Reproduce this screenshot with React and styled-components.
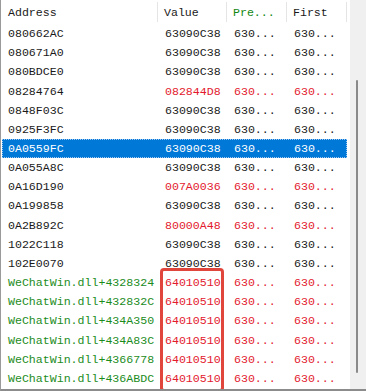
import React from 'react';
import styled, { createGlobalStyle } from 'styled-components';

const GlobalStyle = createGlobalStyle`
  html, body {
    margin: 0;
    padding: 0;
    background: #ffffff;
  }
`;

const columns = ['157px', '69px', '60px', '60px'];

const rows = [
  { address: '080662AC', value: '63090C38' },
  { address: '080671A0', value: '63090C38' },
  { address: '080BDCE0', value: '63090C38' },
  { address: '08284764', value: '082844D8', changed: true },
  { address: '0848F03C', value: '63090C38' },
  { address: '0925F3FC', value: '63090C38' },
  { address: '0A0559FC', value: '63090C38', selected: true },
  { address: '0A055A8C', value: '63090C38' },
  { address: '0A16D190', value: '007A0036', changed: true },
  { address: '0A199858', value: '63090C38' },
  { address: '0A2B892C', value: '80000A48', changed: true },
  { address: '1022C118', value: '63090C38' },
  { address: '102E0070', value: '63090C38' },
  { address: 'WeChatWin.dll+4328324', value: '64010510', changed: true, module: true },
  { address: 'WeChatWin.dll+432832C', value: '64010510', changed: true, module: true },
  { address: 'WeChatWin.dll+434A350', value: '64010510', changed: true, module: true },
  { address: 'WeChatWin.dll+434A83C', value: '64010510', changed: true, module: true },
  { address: 'WeChatWin.dll+4366778', value: '64010510', changed: true, module: true },
  { address: 'WeChatWin.dll+436ABDC', value: '64010510', changed: true, module: true },
];

const Frame = styled.div`
  position: relative;
  width: 366px;
  height: 391px;
  box-sizing: border-box;
  border-left: 1px solid #9a9a9a;
  border-bottom: 2px solid #8c8c8c;
  display: flex;
  overflow: hidden;
  font-family: 'Courier New', 'Nimbus Mono PS', 'FreeMono', 'Liberation Mono', monospace;
  font-size: 11.6px;
  color: #1a1a1a;
  background: #ffffff;
`;

const List = styled.div`
  width: 346px;
  display: flex;
  flex-direction: column;
`;

const Header = styled.div`
  display: grid;
  grid-template-columns: ${columns.join(' ')};
  height: 24px;
  flex: none;
`;

const HeadCell = styled.div`
  display: flex;
  align-items: center;
  padding-left: ${(p) => (p.$first ? '7px' : '6px')};
  border-right: 1px solid #e5e5e5;
  margin: 2px 0;
  color: ${(p) => (p.$green ? '#118811' : '#1a1a1a')};
`;

const Row = styled.div`
  display: grid;
  grid-template-columns: ${columns.join(' ')};
  height: 19.17px;
  align-items: center;
  margin-left: 1px;
  background: ${(p) => (p.$selected ? '#0078d7' : 'transparent')};
  outline: ${(p) => (p.$selected ? '1px dotted #9fc8f0' : 'none')};
  outline-offset: -1px;
`;

const Cell = styled.div`
  padding-left: 6px;
  white-space: nowrap;
  overflow: hidden;
  color: ${(p) => p.$color};
`;

const ScrollTrack = styled.div`
  flex: 1;
  margin-left: 3px;
  background: #f0f0f0;
  display: flex;
  justify-content: center;
  padding-top: 80px;
  padding-bottom: 16px;
`;

const Thumb = styled.div`
  width: 2px;
  margin-left: -3px;
  background: #8a8a8a;
  border-radius: 1px;
`;

const Highlight = styled.div`
  position: absolute;
  left: 159px;
  top: 268px;
  width: 64px;
  height: 124px;
  box-sizing: border-box;
  border: 3px solid #e0463c;
  border-radius: 4px;
  pointer-events: none;
`;

const RED = '#e3192e';
const GREEN = '#1c8c1c';

export default function App() {
  return (
    <>
      <GlobalStyle />
      <Frame>
        <List>
          <Header>
            <HeadCell $first>Address</HeadCell>
            <HeadCell>Value</HeadCell>
            <HeadCell $green>Pre...</HeadCell>
            <HeadCell>First</HeadCell>
          </Header>
          {rows.map((r) => {
            const base = r.selected ? '#ffffff' : '#1a1a1a';
            const tone = r.selected ? '#ffffff' : r.changed ? RED : base;
            return (
              <Row key={r.address} $selected={r.selected}>
                <Cell $color={r.module ? GREEN : base}>{r.address}</Cell>
                <Cell $color={tone}>{r.value}</Cell>
                <Cell $color={tone}>630...</Cell>
                <Cell $color={tone}>630...</Cell>
              </Row>
            );
          })}
        </List>
        <ScrollTrack>
          <Thumb />
        </ScrollTrack>
        <Highlight />
      </Frame>
    </>
  );
}
